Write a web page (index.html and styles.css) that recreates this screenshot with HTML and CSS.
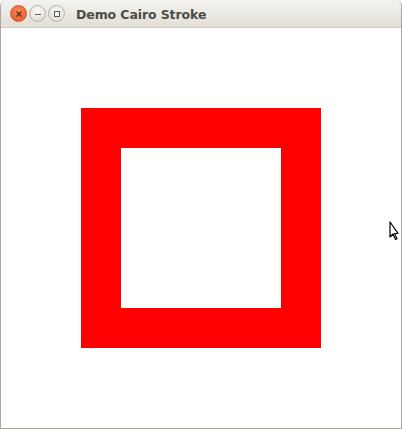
FILE: index.html
```html
<!DOCTYPE html>
<html>
<head>
<meta charset="utf-8">
<link rel="stylesheet" href="styles.css">
</head>
<body>
<div class="window">
  <div class="titlebar">
    <div class="buttons">
      <span class="btn close">
        <svg width="8" height="8" viewBox="0 0 8 8"><path d="M1.5 1.5 L6.5 6.5 M6.5 1.5 L1.5 6.5" stroke="#5a2a16" stroke-width="1.3"/></svg>
      </span>
      <span class="btn">
        <svg width="8" height="8" viewBox="0 0 8 8"><path d="M1 4.5 H7" stroke="#5c5a55" stroke-width="1.2"/></svg>
      </span>
      <span class="btn">
        <svg width="8" height="8" viewBox="0 0 8 8"><rect x="1.5" y="1.5" width="5" height="5" fill="none" stroke="#5c5a55" stroke-width="1"/></svg>
      </span>
    </div>
    <div class="title">Demo Cairo Stroke</div>
  </div>
  <div class="content">
    <div class="square"></div>
    <svg class="cursor" width="10" height="20" viewBox="0 0 10 20">
      <path d="M1 1 L1 16 L4 13 L6.5 18.5 L8 17.8 L5.6 12.5 L9 12.3 Z" fill="#fff" stroke="#000" stroke-width="1.2" stroke-linejoin="round"/>
    </svg>
  </div>
</div>
</body>
</html>
```

FILE: styles.css
```css
html, body {
  margin: 0;
  padding: 0;
  background: #fff;
}
.window {
  width: 402px;
  height: 429px;
  box-sizing: border-box;
  border: 1px solid #aea89f;
  border-top: none;
  border-radius: 6px 6px 0 0;
  background: #fff;
  display: flex;
  flex-direction: column;
  overflow: hidden;
}
.titlebar {
  height: 28px;
  flex: none;
  box-sizing: border-box;
  background: linear-gradient(#f4f3f0, #e2ded7);
  border-bottom: 1px solid #cfcac1;
  border-radius: 6px 6px 0 0;
  display: flex;
  align-items: center;
  padding-left: 9px;
}
.buttons {
  display: flex;
  gap: 2px;
  align-items: center;
}
.btn {
  width: 17px;
  height: 17px;
  border-radius: 50%;
  box-sizing: border-box;
  border: 1px solid #b4afa6;
  background: radial-gradient(circle at 50% 35%, #fbfaf8, #dcd8d0);
  display: flex;
  align-items: center;
  justify-content: center;
}
.btn.close {
  border-color: #c85a2e;
  background: radial-gradient(circle at 50% 35%, #f88a5e, #e2551f);
}
.title {
  margin-left: 11px;
  font-family: "DejaVu Sans", sans-serif;
  font-weight: bold;
  font-size: 12.5px;
  color: #4d4b46;
  letter-spacing: -0.1px;
  padding-top: 1px;
}
.content {
  flex: 1;
  position: relative;
  padding-top: 80px;
  padding-left: 80px;
}
.square {
  width: 160px;
  height: 160px;
  border: 40px solid #ff0000;
  background: #fff;
}
.cursor {
  position: absolute;
  left: 388px;
  top: 193px;
}
```
